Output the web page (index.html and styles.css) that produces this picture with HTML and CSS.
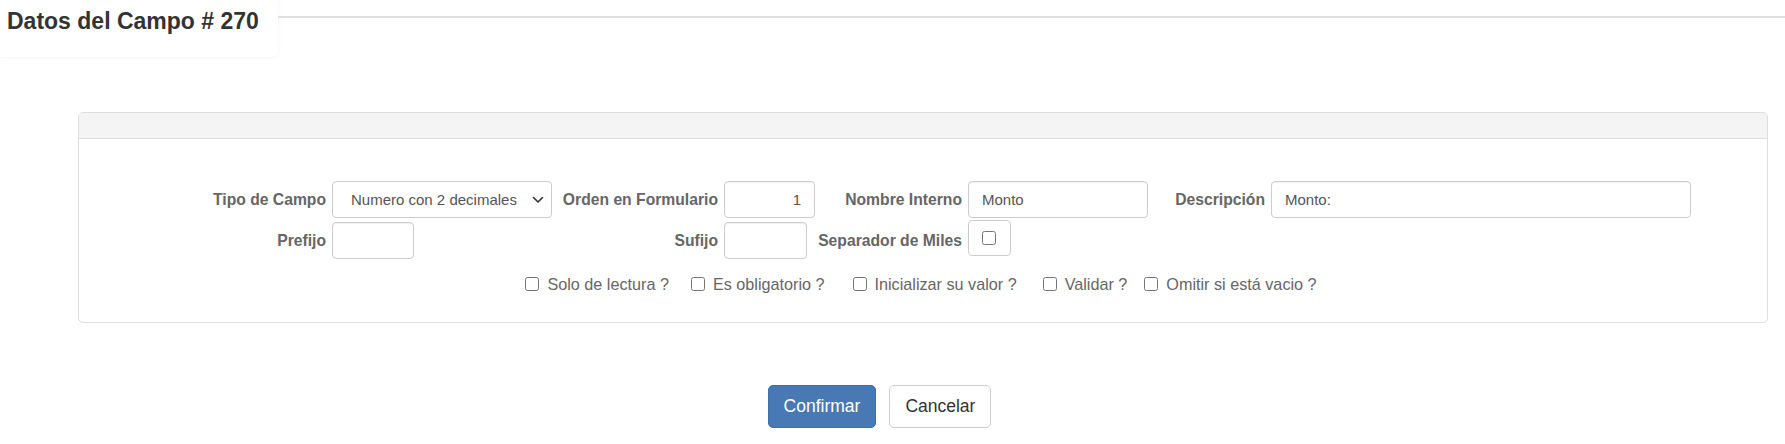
FILE: index.html
```html
<!DOCTYPE html>
<html lang="es">
<head>
<meta charset="utf-8">
<title>Datos del Campo # 270</title>
<link rel="stylesheet" href="styles.css">
</head>
<body>
<div class="page-head">
  <div class="title-box"><h1 class="title">Datos del Campo # 270</h1></div>
  <div class="head-line"></div>
</div>

<div class="panel">
  <div class="panel-heading"></div>
  <div class="panel-body">
    <div class="field-grid">
      <label class="ctl-label">Tipo de Campo</label>
      <div class="select-wrap">
        <select class="ctl ctl-select">
          <option>Numero con 2 decimales</option>
        </select>
        <svg class="chevron" width="12" height="8" viewBox="0 0 12 8" aria-hidden="true">
          <path d="M1.5 1.5 L6 6 L10.5 1.5" fill="none" stroke="#333" stroke-width="1.6" stroke-linecap="round" stroke-linejoin="round"/>
        </svg>
      </div>
      <label class="ctl-label">Orden en Formulario</label>
      <input class="ctl ctl-right" type="text" value="1">
      <label class="ctl-label">Nombre Interno</label>
      <input class="ctl" type="text" value="Monto">
      <label class="ctl-label">Descripción</label>
      <input class="ctl" type="text" value="Monto:">

      <label class="ctl-label">Prefijo</label>
      <input class="ctl ctl-prefix" type="text">
      <label class="ctl-label">Sufijo</label>
      <input class="ctl ctl-suffix" type="text">
      <label class="ctl-label">Separador de Miles</label>
      <span class="check-box-wrap"><input type="checkbox" class="chk"></span>
    </div>

    <div class="check-row">
      <label class="check-item"><input type="checkbox" class="chk"> Solo de lectura ?</label>
      <label class="check-item gap-b"><input type="checkbox" class="chk"> Es obligatorio ?</label>
      <label class="check-item gap-c"><input type="checkbox" class="chk"> Inicializar su valor ?</label>
      <label class="check-item gap-d"><input type="checkbox" class="chk"> Validar ?</label>
      <label class="check-item gap-e"><input type="checkbox" class="chk"> Omitir si está vacio ?</label>
    </div>
  </div>
</div>

<div class="actions">
  <button class="btn btn-primary" type="button">Confirmar</button>
  <button class="btn btn-default" type="button">Cancelar</button>
</div>
</body>
</html>
```

FILE: styles.css
```css
html, body {
  margin: 0;
  padding: 0;
  background: #ffffff;
}

body {
  font-family: "Liberation Sans", Arial, sans-serif;
  color: #333333;
}

/* ---------- header ---------- */
.page-head {
  display: flex;
  align-items: flex-start;
}

.title-box {
  width: 278px;
  height: 57px;
  box-sizing: border-box;
  padding: 8px 0 0 7px;
  background: #ffffff;
  border-radius: 0 0 5px 0;
  box-shadow: 0 0 4px rgba(0, 0, 0, 0.07);
}

.title {
  margin: 0;
  font-size: 23px;
  line-height: 26px;
  font-weight: bold;
  color: #333333;
  white-space: nowrap;
}

.head-line {
  flex: 1;
  height: 2px;
  margin-top: 16px;
  background: #e0e0e0;
}

/* ---------- panel ---------- */
.panel {
  margin: 55px 0 0 78px;
  width: 1690px;
  box-sizing: border-box;
  border: 1px solid #dddddd;
  border-radius: 5px;
  overflow: hidden;
}

.panel-heading {
  height: 25px;
  background: #f4f4f4;
  border-bottom: 1px solid #dddddd;
}

.panel-body {
  padding: 42px 0 27px 0;
}

.field-grid {
  display: grid;
  grid-template-columns: 253px 220px 172px 91px 153px 180px 123px 420px;
  grid-auto-rows: 37px;
  row-gap: 4px;
  align-items: center;
}

.ctl-label {
  justify-self: end;
  padding-right: 6px;
  font-size: 15.7px;
  font-weight: bold;
  color: #666666;
  white-space: nowrap;
}

.ctl {
  box-sizing: border-box;
  height: 37px;
  width: 100%;
  border: 1px solid #cccccc;
  border-radius: 4px;
  padding: 0 13px;
  font-family: "Liberation Sans", Arial, sans-serif;
  font-size: 15px;
  color: #555555;
  background: #ffffff;
  box-shadow: inset 0 1px 1px rgba(0, 0, 0, 0.06);
}

.select-wrap {
  position: relative;
  height: 37px;
}

.ctl-select {
  appearance: none;
  -webkit-appearance: none;
  padding: 0 30px 0 18px;
  box-shadow: none;
}

.chevron {
  position: absolute;
  right: 8px;
  top: 15px;
  pointer-events: none;
}

.ctl-right {
  text-align: right;
}

.ctl-prefix {
  width: 82px;
}

.ctl-suffix {
  width: 83px;
}

.check-box-wrap {
  box-sizing: border-box;
  width: 43px;
  height: 36px;
  margin-top: -5px;
  border: 1px solid #cccccc;
  border-radius: 4px;
  display: flex;
  align-items: center;
  padding-left: 13px;
}

.chk {
  width: 14px;
  height: 14px;
  margin: 0;
}

/* ---------- checkboxes row ---------- */
.check-row {
  display: flex;
  justify-content: center;
  align-items: center;
  margin-top: 14px;
  height: 22px;
  padding-right: 4px;
}

.check-item {
  display: flex;
  align-items: center;
  gap: 8px;
  font-size: 16.2px;
  color: #666666;
  white-space: nowrap;
}

.gap-b { margin-left: 22px; }
.gap-c { margin-left: 28px; }
.gap-d { margin-left: 26px; }
.gap-e { margin-left: 17px; }

/* ---------- buttons ---------- */
.actions {
  display: flex;
  justify-content: center;
  gap: 13px;
  margin-top: 62px;
  padding-right: 26px;
}

.btn {
  box-sizing: border-box;
  height: 43px;
  padding: 0 15px;
  border-radius: 5px;
  font-family: "Liberation Sans", Arial, sans-serif;
  font-size: 17.5px;
  cursor: pointer;
}

.btn-primary {
  background: #4879b5;
  border: 1px solid #3f6ea8;
  color: #ffffff;
}

.btn-default {
  background: #ffffff;
  border: 1px solid #cccccc;
  color: #333333;
}
```
